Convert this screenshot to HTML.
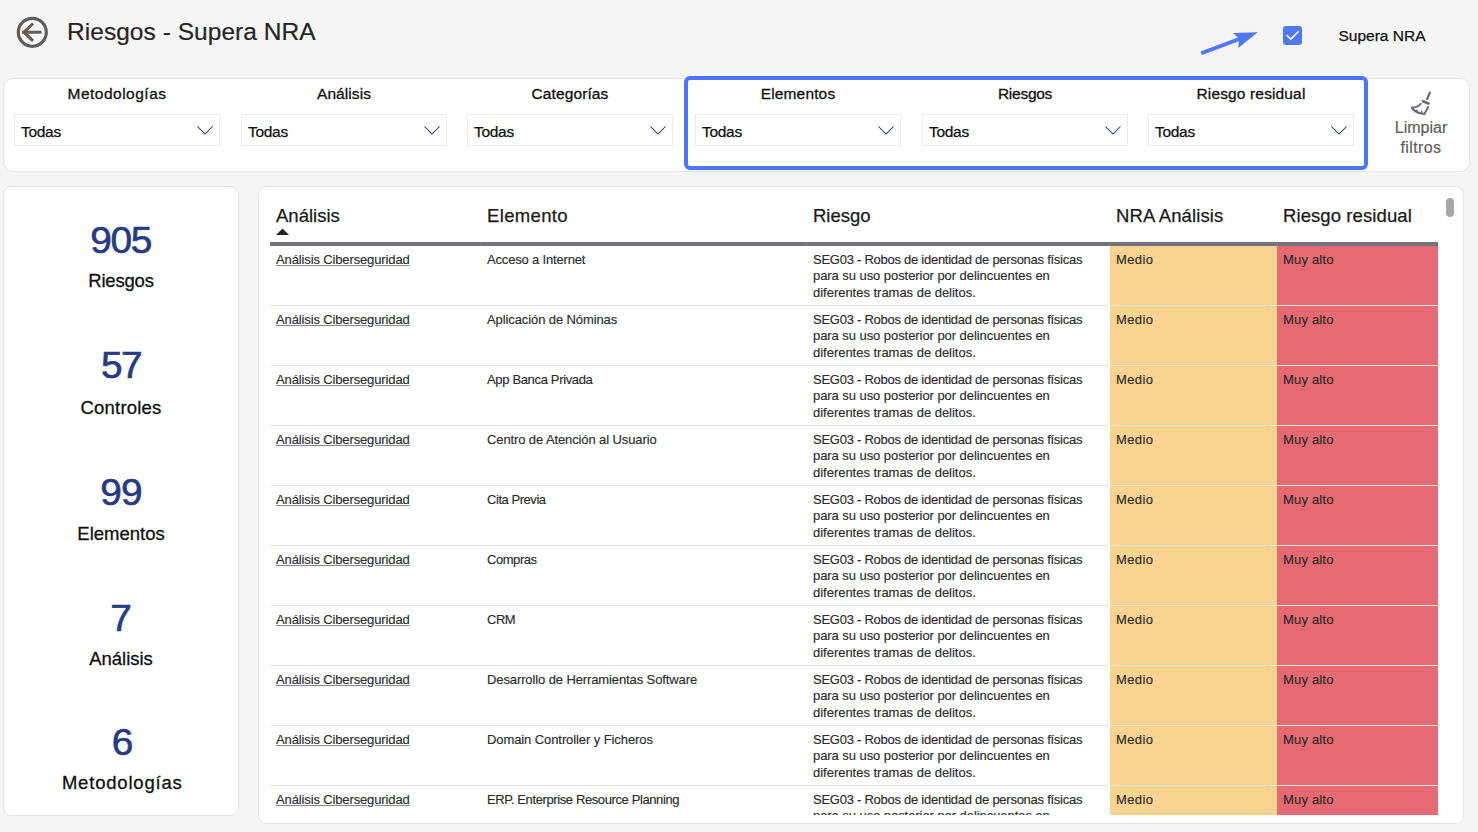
<!DOCTYPE html>
<html>
<head>
<meta charset="utf-8">
<style>
html,body{margin:0;padding:0;}
body{width:1478px;height:832px;overflow:hidden;background:#F5F5F5;position:relative;font-family:"Liberation Sans",sans-serif;}
.a{position:absolute;white-space:nowrap;}
.panel{position:absolute;background:#fff;border:1px solid #E0E6E6;box-sizing:border-box;}
.sh{position:absolute;top:84px;width:206px;text-align:center;font-size:15.5px;color:#111;-webkit-text-stroke:0.3px #111;line-height:20px;}
.box{position:absolute;top:114px;height:32px;width:205.5px;box-sizing:border-box;border:1px solid #EAEAEA;background:#fff;}
.box span{position:absolute;left:6px;top:7.5px;font-size:15.5px;letter-spacing:-0.3px;color:#111;-webkit-text-stroke:0.25px #111;line-height:18px;}
.box svg{position:absolute;right:6px;top:11px;}
.kn{position:absolute;left:4px;width:234px;text-align:center;font-size:36px;margin-top:1.3px;color:#263B84;-webkit-text-stroke:0.6px #263B84;line-height:40px;transform:scaleX(1.08);transform-origin:50% 0;}
.kl{position:absolute;left:4px;width:234px;text-align:center;font-size:18.5px;margin-top:0.7px;color:#111;-webkit-text-stroke:0.3px #111;line-height:22px;}
.th{position:absolute;top:205px;font-size:18.5px;color:#1a1a1a;-webkit-text-stroke:0.25px #1a1a1a;line-height:22px;}
.cell{position:absolute;font-size:13px;color:#2B2B2B;-webkit-text-stroke:0.15px #2B2B2B;line-height:16.3px;white-space:nowrap;}
</style>
</head>
<body>
<!-- header -->
<svg class="a" style="left:14px;top:14px" width="36" height="36" viewBox="0 0 36 36">
  <circle cx="18.3" cy="18.3" r="14" fill="none" stroke="#605E5C" stroke-width="3.2"/>
  <path d="M8.2 18.2 H27.5" stroke="#605E5C" stroke-width="3" fill="none"/>
  <path d="M19 9.5 L9.8 18.2 L19 26.8" stroke="#605E5C" stroke-width="3" fill="none"/>
</svg>
<div class="a" style="left:67px;top:16.5px;font-size:24.5px;letter-spacing:0.04px;color:#252423;-webkit-text-stroke:0.2px #252423;line-height:30px;">Riesgos - Supera NRA</div>

<svg class="a" style="left:1195px;top:25px" width="70" height="35" viewBox="1195 25 70 35">
  <polygon points="1200.4,51.4 1237.9,37.6 1233,33 1257.8,32.2 1238.3,47.9 1238.8,41.2 1202.2,55.1" fill="#5078FA"/>
</svg>
<div class="a" style="left:1283px;top:26px;width:19px;height:19px;border-radius:3px;background:#5078FA;"></div>
<svg class="a" style="left:1283px;top:26px" width="19" height="19" viewBox="0 0 19 19">
  <path d="M3.5 9.1 L7.8 13.1 L15.7 5.3" stroke="#fff" stroke-width="1.5" fill="none"/>
</svg>
<div class="a" style="left:1338.5px;top:26px;font-size:15.5px;color:#111;-webkit-text-stroke:0.25px #111;line-height:20px;">Supera NRA</div>

<!-- filter panel -->
<div class="panel" style="left:3px;top:78px;width:1467px;height:94px;border-radius:10px;"></div>
<div class="a" style="left:684px;top:76px;width:684px;height:94px;box-sizing:border-box;border:4px solid #4D74FA;border-radius:6px;"></div>

<div class="sh" style="left:14px;letter-spacing:0.5px">Metodologías</div>
<div class="box" style="left:14px"><span>Todas</span><svg width="16" height="9" viewBox="0 0 16 9"><path d="M0.5 0.5 L8 8 L15.5 0.5" stroke="#1F2870" stroke-width="1.05" fill="none"/></svg></div>
<div class="sh" style="left:241px;letter-spacing:0.08px">Análisis</div>
<div class="box" style="left:241px"><span>Todas</span><svg width="16" height="9" viewBox="0 0 16 9"><path d="M0.5 0.5 L8 8 L15.5 0.5" stroke="#1F2870" stroke-width="1.05" fill="none"/></svg></div>
<div class="sh" style="left:467px;letter-spacing:0.1px">Categorías</div>
<div class="box" style="left:467px"><span>Todas</span><svg width="16" height="9" viewBox="0 0 16 9"><path d="M0.5 0.5 L8 8 L15.5 0.5" stroke="#1F2870" stroke-width="1.05" fill="none"/></svg></div>
<div class="sh" style="left:695px;letter-spacing:0.15px">Elementos</div>
<div class="box" style="left:695px"><span>Todas</span><svg width="16" height="9" viewBox="0 0 16 9"><path d="M0.5 0.5 L8 8 L15.5 0.5" stroke="#1F2870" stroke-width="1.05" fill="none"/></svg></div>
<div class="sh" style="left:922px;letter-spacing:-0.25px">Riesgos</div>
<div class="box" style="left:922px"><span>Todas</span><svg width="16" height="9" viewBox="0 0 16 9"><path d="M0.5 0.5 L8 8 L15.5 0.5" stroke="#1F2870" stroke-width="1.05" fill="none"/></svg></div>
<div class="sh" style="left:1148px;letter-spacing:0.14px">Riesgo residual</div>
<div class="box" style="left:1148px"><span>Todas</span><svg width="16" height="9" viewBox="0 0 16 9"><path d="M0.5 0.5 L8 8 L15.5 0.5" stroke="#1F2870" stroke-width="1.05" fill="none"/></svg></div>

<!-- limpiar -->
<svg class="a" style="left:1405px;top:88px" width="32" height="30" viewBox="0 0 32 30">
  <g stroke="#6B6A72" fill="none" stroke-linecap="round" stroke-linejoin="round">
  <path d="M24.9 4.6 L22.1 11.1" stroke-width="2.2"/>
  <path d="M18 13.3 L23.6 15.4" stroke-width="2.7"/>
  <path d="M15.8 15.8 C13.5 18.3 10.5 19.4 6.9 19.7" stroke-width="1.9"/>
  <path d="M6.9 19.9 C9 23.2 13.5 25.4 19.4 26" stroke-width="2.1"/>
  <path d="M23.1 19 L19.6 25.8" stroke-width="2"/>
  </g>
  <path d="M10.6 23.2 L12 20.9 L13.4 23.9 Z M15.3 24.4 L16.7 22.1 L17.9 24.9 Z" fill="#6B6A72"/>
</svg>
<div class="a" style="left:1371px;top:118px;width:100px;text-align:center;font-size:16px;color:#605E5C;-webkit-text-stroke:0.2px #605E5C;line-height:19.8px;white-space:normal;">Limpiar<br><span style="letter-spacing:0.4px">filtros</span></div>

<!-- KPI card -->
<div class="panel" style="left:3px;top:186px;width:236px;height:630px;border-radius:9px;"></div>
<div class="kn" style="top:220px;letter-spacing:-1.2px;text-indent:-0.6px">905</div>
<div class="kl" style="top:269px;letter-spacing:-0.2px">Riesgos</div>
<div class="kn" style="top:345px;letter-spacing:-1.5px;text-indent:0px">57</div>
<div class="kl" style="top:396px;letter-spacing:0.19px">Controles</div>
<div class="kn" style="top:472px;letter-spacing:-0.8px;text-indent:0px">99</div>
<div class="kl" style="top:522px">Elementos</div>
<div class="kn" style="top:598px">7</div>
<div class="kl" style="top:647px">Análisis</div>
<div class="kn" style="top:722px;text-indent:3px">6</div>
<div class="kl" style="top:771px;letter-spacing:0.8px;text-indent:2.5px">Metodologías</div>

<!-- table panel -->
<div class="panel" style="left:258px;top:186px;width:1206px;height:638px;border-radius:9px;"></div>
<div id="tbl" class="a" style="left:0;top:0;width:1478px;height:815px;overflow:hidden;">
<div class="th" style="left:276px">Análisis</div>
<svg class="a" style="left:276px;top:228px" width="13" height="7" viewBox="0 0 13 7"><polygon points="0,7 6.5,0.5 13,7" fill="#252423"/></svg>
<div class="th" style="left:487px;letter-spacing:0.35px">Elemento</div>
<div class="th" style="left:813px">Riesgo</div>
<div class="th" style="left:1116px;letter-spacing:0.13px">NRA Análisis</div>
<div class="th" style="left:1283px;letter-spacing:0.09px">Riesgo residual</div>
<div class="a" style="left:270px;top:242px;width:1168px;height:3.8px;background:#74737C"></div>
<div class="a" style="left:480px;top:242px;width:1px;height:3.8px;background:#7F7E86"></div>
<div class="a" style="left:806px;top:242px;width:1px;height:3.8px;background:#7F7E86"></div>
<div class="a" style="left:1110px;top:242px;width:1px;height:3.8px;background:#7F7E86"></div>
<div class="a" style="left:1277px;top:242px;width:1px;height:3.8px;background:#7F7E86"></div>
<div class="a" style="left:1110px;top:246px;width:167px;height:59px;background:#F9D38F"></div>
<div class="a" style="left:1277px;top:246px;width:161px;height:59px;background:#E56A71"></div>
<div class="a" style="left:270px;top:305px;width:1168px;height:1px;background:#E6E6E6"></div>
<div class="cell" style="left:276px;top:251.5px;text-decoration:underline;text-underline-offset:0.5px;text-decoration-color:#8a8a8a;letter-spacing:-0.13px;">Análisis Ciberseguridad</div>
<div class="cell" style="left:487px;top:251.5px;letter-spacing:-0.17px">Acceso a Internet</div>
<div class="cell" style="left:813px;top:251.5px;letter-spacing:-0.26px">SEG03 - Robos de identidad de personas físicas</div>
<div class="cell" style="left:813px;top:267.5px;letter-spacing:-0.06px">para su uso posterior por delincuentes en</div>
<div class="cell" style="left:813px;top:284.5px;letter-spacing:-0.02px">diferentes tramas de delitos.</div>
<div class="cell" style="left:1116px;top:251.5px;letter-spacing:0.4px">Medio</div>
<div class="cell" style="left:1283px;top:251.5px;letter-spacing:0.18px">Muy alto</div>
<div class="a" style="left:1110px;top:306px;width:167px;height:59px;background:#F9D38F"></div>
<div class="a" style="left:1277px;top:306px;width:161px;height:59px;background:#E56A71"></div>
<div class="a" style="left:270px;top:365px;width:1168px;height:1px;background:#E6E6E6"></div>
<div class="cell" style="left:276px;top:311.5px;text-decoration:underline;text-underline-offset:0.5px;text-decoration-color:#8a8a8a;letter-spacing:-0.13px;">Análisis Ciberseguridad</div>
<div class="cell" style="left:487px;top:311.5px;letter-spacing:-0.1px">Aplicación de Nóminas</div>
<div class="cell" style="left:813px;top:311.5px;letter-spacing:-0.26px">SEG03 - Robos de identidad de personas físicas</div>
<div class="cell" style="left:813px;top:327.5px;letter-spacing:-0.06px">para su uso posterior por delincuentes en</div>
<div class="cell" style="left:813px;top:344.5px;letter-spacing:-0.02px">diferentes tramas de delitos.</div>
<div class="cell" style="left:1116px;top:311.5px;letter-spacing:0.4px">Medio</div>
<div class="cell" style="left:1283px;top:311.5px;letter-spacing:0.18px">Muy alto</div>
<div class="a" style="left:1110px;top:366px;width:167px;height:59px;background:#F9D38F"></div>
<div class="a" style="left:1277px;top:366px;width:161px;height:59px;background:#E56A71"></div>
<div class="a" style="left:270px;top:425px;width:1168px;height:1px;background:#E6E6E6"></div>
<div class="cell" style="left:276px;top:371.5px;text-decoration:underline;text-underline-offset:0.5px;text-decoration-color:#8a8a8a;letter-spacing:-0.13px;">Análisis Ciberseguridad</div>
<div class="cell" style="left:487px;top:371.5px;letter-spacing:-0.34px">App Banca Privada</div>
<div class="cell" style="left:813px;top:371.5px;letter-spacing:-0.26px">SEG03 - Robos de identidad de personas físicas</div>
<div class="cell" style="left:813px;top:387.5px;letter-spacing:-0.06px">para su uso posterior por delincuentes en</div>
<div class="cell" style="left:813px;top:404.5px;letter-spacing:-0.02px">diferentes tramas de delitos.</div>
<div class="cell" style="left:1116px;top:371.5px;letter-spacing:0.4px">Medio</div>
<div class="cell" style="left:1283px;top:371.5px;letter-spacing:0.18px">Muy alto</div>
<div class="a" style="left:1110px;top:426px;width:167px;height:59px;background:#F9D38F"></div>
<div class="a" style="left:1277px;top:426px;width:161px;height:59px;background:#E56A71"></div>
<div class="a" style="left:270px;top:485px;width:1168px;height:1px;background:#E6E6E6"></div>
<div class="cell" style="left:276px;top:431.5px;text-decoration:underline;text-underline-offset:0.5px;text-decoration-color:#8a8a8a;letter-spacing:-0.13px;">Análisis Ciberseguridad</div>
<div class="cell" style="left:487px;top:431.5px;letter-spacing:-0.11px">Centro de Atención al Usuario</div>
<div class="cell" style="left:813px;top:431.5px;letter-spacing:-0.26px">SEG03 - Robos de identidad de personas físicas</div>
<div class="cell" style="left:813px;top:447.5px;letter-spacing:-0.06px">para su uso posterior por delincuentes en</div>
<div class="cell" style="left:813px;top:464.5px;letter-spacing:-0.02px">diferentes tramas de delitos.</div>
<div class="cell" style="left:1116px;top:431.5px;letter-spacing:0.4px">Medio</div>
<div class="cell" style="left:1283px;top:431.5px;letter-spacing:0.18px">Muy alto</div>
<div class="a" style="left:1110px;top:486px;width:167px;height:59px;background:#F9D38F"></div>
<div class="a" style="left:1277px;top:486px;width:161px;height:59px;background:#E56A71"></div>
<div class="a" style="left:270px;top:545px;width:1168px;height:1px;background:#E6E6E6"></div>
<div class="cell" style="left:276px;top:491.5px;text-decoration:underline;text-underline-offset:0.5px;text-decoration-color:#8a8a8a;letter-spacing:-0.13px;">Análisis Ciberseguridad</div>
<div class="cell" style="left:487px;top:491.5px;letter-spacing:-0.45px">Cita Previa</div>
<div class="cell" style="left:813px;top:491.5px;letter-spacing:-0.26px">SEG03 - Robos de identidad de personas físicas</div>
<div class="cell" style="left:813px;top:507.5px;letter-spacing:-0.06px">para su uso posterior por delincuentes en</div>
<div class="cell" style="left:813px;top:524.5px;letter-spacing:-0.02px">diferentes tramas de delitos.</div>
<div class="cell" style="left:1116px;top:491.5px;letter-spacing:0.4px">Medio</div>
<div class="cell" style="left:1283px;top:491.5px;letter-spacing:0.18px">Muy alto</div>
<div class="a" style="left:1110px;top:546px;width:167px;height:59px;background:#F9D38F"></div>
<div class="a" style="left:1277px;top:546px;width:161px;height:59px;background:#E56A71"></div>
<div class="a" style="left:270px;top:605px;width:1168px;height:1px;background:#E6E6E6"></div>
<div class="cell" style="left:276px;top:551.5px;text-decoration:underline;text-underline-offset:0.5px;text-decoration-color:#8a8a8a;letter-spacing:-0.13px;">Análisis Ciberseguridad</div>
<div class="cell" style="left:487px;top:551.5px;letter-spacing:-0.45px">Compras</div>
<div class="cell" style="left:813px;top:551.5px;letter-spacing:-0.26px">SEG03 - Robos de identidad de personas físicas</div>
<div class="cell" style="left:813px;top:567.5px;letter-spacing:-0.06px">para su uso posterior por delincuentes en</div>
<div class="cell" style="left:813px;top:584.5px;letter-spacing:-0.02px">diferentes tramas de delitos.</div>
<div class="cell" style="left:1116px;top:551.5px;letter-spacing:0.4px">Medio</div>
<div class="cell" style="left:1283px;top:551.5px;letter-spacing:0.18px">Muy alto</div>
<div class="a" style="left:1110px;top:606px;width:167px;height:59px;background:#F9D38F"></div>
<div class="a" style="left:1277px;top:606px;width:161px;height:59px;background:#E56A71"></div>
<div class="a" style="left:270px;top:665px;width:1168px;height:1px;background:#E6E6E6"></div>
<div class="cell" style="left:276px;top:611.5px;text-decoration:underline;text-underline-offset:0.5px;text-decoration-color:#8a8a8a;letter-spacing:-0.13px;">Análisis Ciberseguridad</div>
<div class="cell" style="left:487px;top:611.5px;letter-spacing:-0.5px">CRM</div>
<div class="cell" style="left:813px;top:611.5px;letter-spacing:-0.26px">SEG03 - Robos de identidad de personas físicas</div>
<div class="cell" style="left:813px;top:627.5px;letter-spacing:-0.06px">para su uso posterior por delincuentes en</div>
<div class="cell" style="left:813px;top:644.5px;letter-spacing:-0.02px">diferentes tramas de delitos.</div>
<div class="cell" style="left:1116px;top:611.5px;letter-spacing:0.4px">Medio</div>
<div class="cell" style="left:1283px;top:611.5px;letter-spacing:0.18px">Muy alto</div>
<div class="a" style="left:1110px;top:666px;width:167px;height:59px;background:#F9D38F"></div>
<div class="a" style="left:1277px;top:666px;width:161px;height:59px;background:#E56A71"></div>
<div class="a" style="left:270px;top:725px;width:1168px;height:1px;background:#E6E6E6"></div>
<div class="cell" style="left:276px;top:671.5px;text-decoration:underline;text-underline-offset:0.5px;text-decoration-color:#8a8a8a;letter-spacing:-0.13px;">Análisis Ciberseguridad</div>
<div class="cell" style="left:487px;top:671.5px;letter-spacing:-0.11px">Desarrollo de Herramientas Software</div>
<div class="cell" style="left:813px;top:671.5px;letter-spacing:-0.26px">SEG03 - Robos de identidad de personas físicas</div>
<div class="cell" style="left:813px;top:687.5px;letter-spacing:-0.06px">para su uso posterior por delincuentes en</div>
<div class="cell" style="left:813px;top:704.5px;letter-spacing:-0.02px">diferentes tramas de delitos.</div>
<div class="cell" style="left:1116px;top:671.5px;letter-spacing:0.4px">Medio</div>
<div class="cell" style="left:1283px;top:671.5px;letter-spacing:0.18px">Muy alto</div>
<div class="a" style="left:1110px;top:726px;width:167px;height:59px;background:#F9D38F"></div>
<div class="a" style="left:1277px;top:726px;width:161px;height:59px;background:#E56A71"></div>
<div class="a" style="left:270px;top:785px;width:1168px;height:1px;background:#E6E6E6"></div>
<div class="cell" style="left:276px;top:731.5px;text-decoration:underline;text-underline-offset:0.5px;text-decoration-color:#8a8a8a;letter-spacing:-0.13px;">Análisis Ciberseguridad</div>
<div class="cell" style="left:487px;top:731.5px;letter-spacing:-0.09px">Domain Controller y Ficheros</div>
<div class="cell" style="left:813px;top:731.5px;letter-spacing:-0.26px">SEG03 - Robos de identidad de personas físicas</div>
<div class="cell" style="left:813px;top:747.5px;letter-spacing:-0.06px">para su uso posterior por delincuentes en</div>
<div class="cell" style="left:813px;top:764.5px;letter-spacing:-0.02px">diferentes tramas de delitos.</div>
<div class="cell" style="left:1116px;top:731.5px;letter-spacing:0.4px">Medio</div>
<div class="cell" style="left:1283px;top:731.5px;letter-spacing:0.18px">Muy alto</div>
<div class="a" style="left:1110px;top:786px;width:167px;height:59px;background:#F9D38F"></div>
<div class="a" style="left:1277px;top:786px;width:161px;height:59px;background:#E56A71"></div>
<div class="a" style="left:270px;top:845px;width:1168px;height:1px;background:#E6E6E6"></div>
<div class="cell" style="left:276px;top:791.5px;text-decoration:underline;text-underline-offset:0.5px;text-decoration-color:#8a8a8a;letter-spacing:-0.13px;">Análisis Ciberseguridad</div>
<div class="cell" style="left:487px;top:791.5px;letter-spacing:-0.39px">ERP. Enterprise Resource Planning</div>
<div class="cell" style="left:813px;top:791.5px;letter-spacing:-0.26px">SEG03 - Robos de identidad de personas físicas</div>
<div class="cell" style="left:813px;top:807.5px;letter-spacing:-0.06px">para su uso posterior por delincuentes en</div>
<div class="cell" style="left:813px;top:824.5px;letter-spacing:-0.02px">diferentes tramas de delitos.</div>
<div class="cell" style="left:1116px;top:791.5px;letter-spacing:0.4px">Medio</div>
<div class="cell" style="left:1283px;top:791.5px;letter-spacing:0.18px">Muy alto</div>
<div class="a" style="left:1446px;top:197.5px;width:8px;height:19px;border-radius:4px;background:#A8A8A8"></div>
</div>
</body>
</html>
